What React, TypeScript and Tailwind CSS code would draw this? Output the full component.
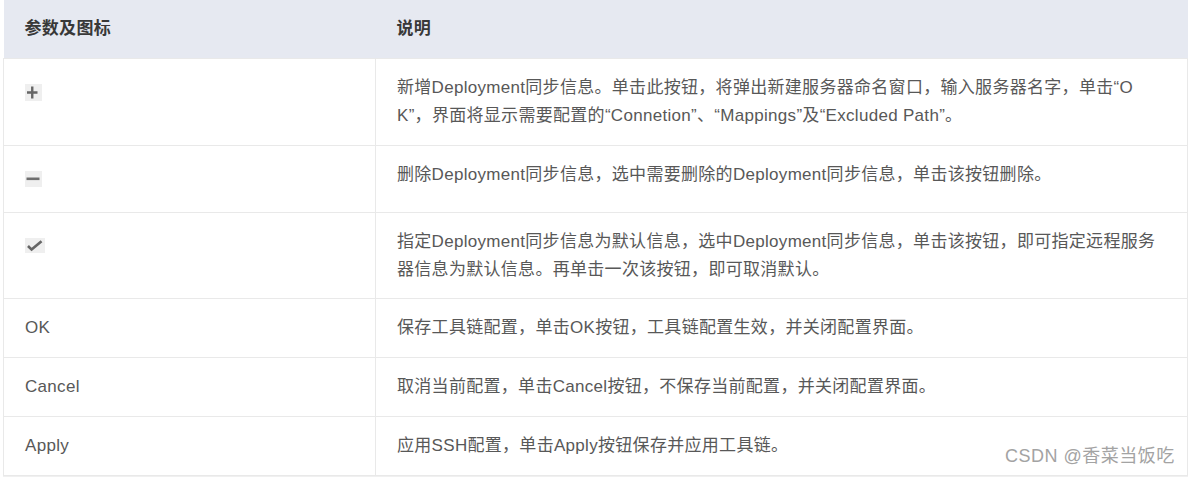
import type { ReactNode } from 'react';

const FONT = '"Liberation Sans", "Noto Sans CJK SC", sans-serif';

function IconBox({ children, w = 17, h = 17 }: { children: ReactNode; w?: number; h?: number }) {
  return (
    <div className="my-[10px] bg-[#efefef]" style={{ width: w, height: h }}>
      <svg width={w} height={h} viewBox={`0 0 ${w} ${h}`}>
        {children}
      </svg>
    </div>
  );
}

const rows: { param: ReactNode; desc: ReactNode; tight?: boolean }[] = [
  {
    param: (
      <IconBox>
        <path d="M2 8.5h10.5M7.25 2.5v12" stroke="#666" strokeWidth="2.4" fill="none" />
      </IconBox>
    ),
    desc: (
      <>
        新增Deployment同步信息。单击此按钮，将弹出新建服务器命名窗口，输入服务器名字，单击“O
        <br />
        K”，界面将显示需要配置的“Connetion”、“Mappings”及“Excluded Path”。
      </>
    ),
  },
  {
    param: (
      <IconBox h={16}>
        <path d="M1.5 7.8h13" stroke="#6e6e6e" strokeWidth="2.6" fill="none" />
      </IconBox>
    ),
    desc: <>删除Deployment同步信息，选中需要删除的Deployment同步信息，单击该按钮删除。</>,
  },
  {
    param: (
      <IconBox w={20} h={15}>
        <path d="M3 8l3.6 3.6L16.5 3.2" stroke="#666" strokeWidth="2.6" fill="none" />
      </IconBox>
    ),
    desc: (
      <>
        指定Deployment同步信息为默认信息，选中Deployment同步信息，单击该按钮，即可指定远程服务
        <br />
        器信息为默认信息。再单击一次该按钮，即可取消默认。
      </>
    ),
    tight: true,
  },
  { param: 'OK', desc: '保存工具链配置，单击OK按钮，工具链配置生效，并关闭配置界面。' },
  { param: 'Cancel', desc: '取消当前配置，单击Cancel按钮，不保存当前配置，并关闭配置界面。' },
  { param: 'Apply', desc: '应用SSH配置，单击Apply按钮保存并应用工具链。' },
];

export default function App() {
  return (
    <div className="relative w-[1191px] h-[477px] bg-white" style={{ fontFamily: FONT }}>
      <table className="ml-[3px] w-[1185px] border-collapse table-fixed">
        <colgroup>
          <col className="w-[372px]" />
          <col />
        </colgroup>
        <thead>
          <tr className="h-[58px] bg-[#e6e9f1] text-[#383838] text-[17px] font-bold tracking-[0.3px]">
            <th className="px-[21px] text-left font-bold">参数及图标</th>
            <th className="px-[21px] text-left font-bold">说明</th>
          </tr>
        </thead>
        <tbody className="text-[17px] leading-[28px] tracking-[0.3px] text-[#585858]">
          {rows.map((r, i) => (
            <tr key={i} className="border border-[#e9e9e9]">
              <td
                className={
                  r.tight
                    ? 'border-r border-[#e9e9e9] px-[21px] pt-[15px] pb-[14px] align-top whitespace-nowrap'
                    : 'border-r border-[#e9e9e9] px-[21px] py-[15px] align-top whitespace-nowrap'
                }
              >
                {r.param}
              </td>
              <td
                className={
                  r.tight
                    ? 'px-[21px] pt-[15px] pb-[14px] align-top whitespace-nowrap'
                    : 'px-[21px] py-[15px] align-top whitespace-nowrap'
                }
              >
                {r.desc}
              </td>
            </tr>
          ))}
        </tbody>
      </table>
      <div className="ml-[3px] w-[1185px] h-[3px] bg-[#f0f0f0]" />
      <div className="absolute left-[1005px] top-[444px] text-[18px] leading-[24px] tracking-[0.5px] text-[#a3a3a3]">
        CSDN @香菜当饭吃
      </div>
    </div>
  );
}
